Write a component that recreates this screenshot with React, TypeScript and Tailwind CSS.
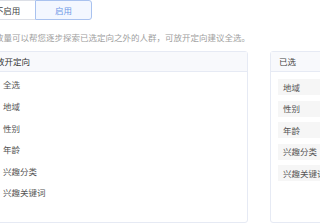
import React from "react";

const leftItems = ["全选", "地域", "性别", "年龄", "兴趣分类", "兴趣关键词"];
const rightItems = ["地域", "性别", "年龄", "兴趣分类", "兴趣关键词"];

export default function App() {
  return (
    <div
      className="w-[320px] h-[224px] overflow-hidden bg-white"
      style={{ fontFamily: '"Noto Sans CJK SC", "Noto Sans", sans-serif' }}
    >
      <div className="-ml-[21px] w-[520px] flex flex-col">
        <div className="flex h-[20px]">
          <div className="w-[56px] h-[20px] flex items-center justify-center border border-[#dcdfe6] border-r-0 rounded-l-[3px] text-[8.5px] text-[#444] bg-white">
            不启用
          </div>
          <div className="w-[57px] h-[20px] flex items-center justify-center border border-[#a9c2ef] rounded-r-[3px] text-[8.5px] text-[#6f98e6] bg-[#f3f7ff]">
            启用
          </div>
        </div>
        <div className="mt-[11px] pl-[16px] h-[12px] leading-[12px] text-[8.5px] text-[#a0a0a0] whitespace-nowrap">
          放量可以帮您逐步探索已选定向之外的人群，可放开定向建议全选。
        </div>
        <div className="mt-[8px] flex gap-[22px]">
          <div className="w-[269px] h-[172px] border border-[#e6eaf4] rounded-[3px] flex flex-col">
            <div className="h-[20px] flex items-center pl-[16px] bg-[#f8f9fc] border-b border-[#e6eaf4] text-[8.5px] text-[#333]">
              放开定向
            </div>
            <div className="pt-[2px] flex flex-col">
              {leftItems.map((t) => (
                <div
                  key={t}
                  className="h-[21.6px] flex items-center pl-[23px] text-[8.5px] text-[#555]"
                >
                  {t}
                </div>
              ))}
            </div>
          </div>
          <div className="w-[150px] h-[172px] border border-[#e6eaf4] rounded-[3px] flex flex-col">
            <div className="h-[20px] flex items-center pl-[8px] bg-[#f8f9fc] border-b border-[#e6eaf4] text-[8.5px] text-[#444]">
              已选
            </div>
            <div className="pt-[7px] pl-[7px] flex flex-col gap-[5.6px]">
              {rightItems.map((t) => (
                <div
                  key={t}
                  className="h-[16px] flex items-center pl-[5px] bg-[#f6f6f6] text-[8.5px] text-[#555]"
                >
                  {t}
                </div>
              ))}
            </div>
          </div>
        </div>
      </div>
    </div>
  );
}
